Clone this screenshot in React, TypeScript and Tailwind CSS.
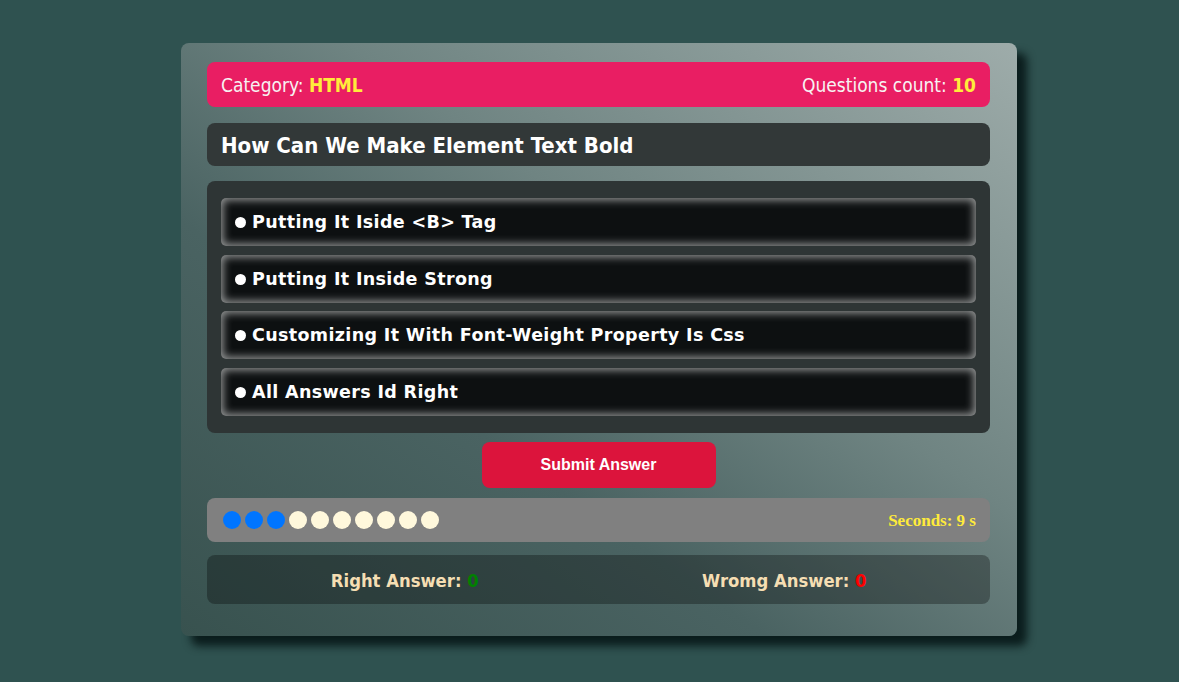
import React from 'react';

const answers = [
  'Putting It Iside <B> Tag',
  'Putting It Inside Strong',
  'Customizing It With Font-Weight Property Is Css',
  'All Answers Id Right',
];

const tahoma = "font-['DejaVu_Sans_Condensed','DejaVu_Sans',sans-serif]";

export default function App() {
  const total = 10;
  const done = 3;

  return (
    <div className="min-h-[682px] bg-[#2f5250] flex justify-center pl-[19px] pt-[43px]">
      <div className="w-[836px] h-[593px] rounded-[8px] bg-[linear-gradient(to_top_right,#38524f_0%,#4a6362_35%,#6f8482_60%,#9eacaa_100%)] shadow-[10px_10px_8px_rgba(5,20,20,0.85)] pt-[19px] pl-[26px] pr-[27px] flex flex-col">
        <div className={`h-[45px] rounded-[8px] bg-[#e91e63] flex items-center justify-between px-[14px] pt-[2px] text-[19px] text-[#f7f2f2] ${tahoma}`}>
          <div>
            Category: <span className="font-bold text-[#ffeb3b]">HTML</span>
          </div>
          <div>
            Questions count: <span className="font-bold text-[#ffeb3b]">10</span>
          </div>
        </div>

        <div className={`mt-[16px] h-[43px] rounded-[8px] bg-[#323838] flex items-center px-[14px] pt-[2px] text-[22px] font-bold text-white ${tahoma}`}>
          How Can We Make Element Text Bold
        </div>

        <div className="mt-[15px] rounded-[8px] bg-[#2e3535] px-[14px] py-[17px] flex flex-col gap-[8.5px]">
          {answers.map((a) => (
            <div
              key={a}
              className="h-[48px] rounded-[5px] bg-[#0d1011] shadow-[inset_0_0_8px_2px_#9a9c9c] flex items-center pl-[14px] pt-[1px] font-['DejaVu_Sans',sans-serif] font-bold text-[17.5px] tracking-[0.35px] text-white"
            >
              <span className="w-[11px] h-[11px] rounded-full bg-white mr-[6px] shrink-0" />
              {a}
            </div>
          ))}
        </div>

        <div className="mt-[9px] flex justify-center">
          <button className="w-[234px] h-[46px] rounded-[8px] bg-[#dc143c] text-white font-['Liberation_Sans',Arial,sans-serif] font-bold text-[16px]">
            Submit Answer
          </button>
        </div>

        <div className="mt-[10px] h-[44px] rounded-[8px] bg-[#808080] flex items-center justify-between pl-[16px] pr-[14px]">
          <div className="flex gap-[4px]">
            {Array.from({ length: total }).map((_, i) => (
              <span
                key={i}
                className={`w-[18px] h-[18px] rounded-full ${i < done ? 'bg-[#0075ff]' : 'bg-[#fff8dc]'}`}
              />
            ))}
          </div>
          <div className="pt-[2px] font-['Liberation_Serif',serif] font-bold text-[17px] text-[#ffeb3b]">
            Seconds: 9 s
          </div>
        </div>

        <div className={`mt-[13px] h-[49px] rounded-[8px] bg-black/30 flex items-center pt-[3px] text-[18.3px] font-bold text-[#f5deb3] ${tahoma}`}>
          <div className="flex-1 text-center pl-[8px]">
            Right Answer: <span className="text-[#008000]">0</span>
          </div>
          <div className="flex-1 text-center pr-[16px]">
            Wromg Answer: <span className="text-[#ff0000]">0</span>
          </div>
        </div>
      </div>
    </div>
  );
}
